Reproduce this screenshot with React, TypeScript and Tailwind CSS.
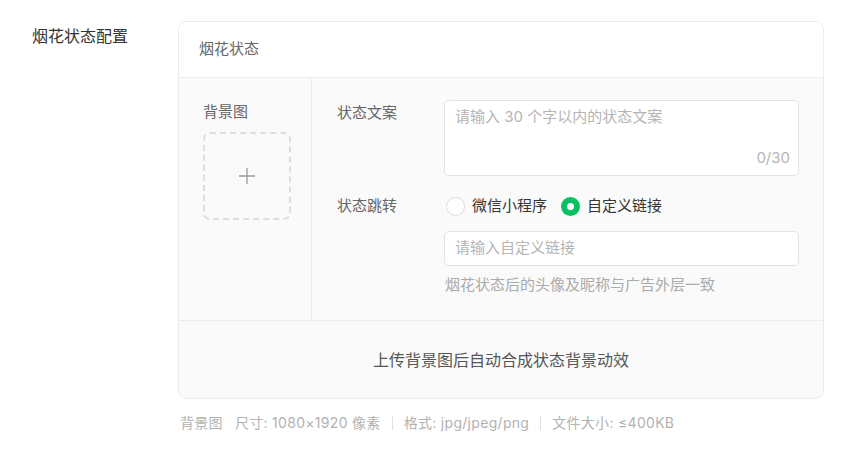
const font = { fontFamily: 'Inter, "Noto Sans CJK SC", sans-serif' }

function Radio({ checked, label }: { checked?: boolean; label: string }) {
  return (
    <label className="flex items-center gap-[7px]">
      {checked ? (
        <span className="flex h-[19px] w-[19px] items-center justify-center rounded-full bg-[#07c160]">
          <span className="h-[7px] w-[7px] rounded-full bg-white" />
        </span>
      ) : (
        <span className="h-[19px] w-[19px] rounded-full border border-[#dcdcdc] bg-white" />
      )}
      <span className="text-[15px] leading-[22px] text-[#353535]">{label}</span>
    </label>
  )
}

function Sep() {
  return <span className="mx-[11px] inline-block h-[14px] w-px bg-[#e2e2e2] align-[-2px]" />
}

export default function App() {
  return (
    <div className="flex h-[455px] w-[850px] bg-white pt-[21px]" style={font}>
      <div className="w-[178px] shrink-0 pl-[32px] pt-[3px] text-[16px] leading-[24px] text-[#353535]">
        烟花状态配置
      </div>

      <div className="w-[646px]">
        <div className="overflow-hidden rounded-[8px] border border-[#ececec] bg-[#fafafa]">
          {/* header */}
          <div className="flex h-[56px] items-center border-b border-[#ececec] bg-white pl-5 text-[15px] text-[#666]">
            烟花状态
          </div>

          {/* body */}
          <div className="flex border-b border-[#ececec]">
            <div className="w-[133px] shrink-0 border-r border-[#ececec] pl-6 pt-[23px]">
              <div className="text-[15px] leading-[22px] text-[#666]">背景图</div>
              <div className="mt-[9px] flex h-[88px] w-[88px] items-center justify-center rounded-[7px] border-2 border-dashed border-[#dedede]">
                <svg width="18" height="18" viewBox="0 0 18 18">
                  <path d="M9 1v16M1 9h16" stroke="#999" strokeWidth="1.3" />
                </svg>
              </div>
            </div>

            <div className="flex-1 pb-[24px] pl-[25px] pr-[24px] pt-[22px]">
              <div className="flex">
                <div className="w-[107px] shrink-0 pt-[2px] text-[15px] leading-[22px] text-[#666]">状态文案</div>
                <div className="relative h-[76px] flex-1 rounded-[5px] border border-[#e3e3e3] bg-white px-[10px] pt-[5px]">
                  <div className="text-[15px] leading-[22px] text-[#b5b5b5]">请输入 30 个字以内的状态文案</div>
                  <div className="absolute bottom-[6px] right-[8px] text-[15px] leading-[22px] text-[#b5b5b5]">0/30</div>
                </div>
              </div>

              <div className="mt-[19px] flex items-center">
                <div className="w-[107px] shrink-0 text-[15px] leading-[22px] text-[#666]">状态跳转</div>
                <div className="flex items-center gap-[14px] pl-[2px]">
                  <Radio label="微信小程序" />
                  <Radio checked label="自定义链接" />
                </div>
              </div>

              <div className="ml-[107px] mt-[14px] flex h-[35px] items-center rounded-[5px] border border-[#e3e3e3] bg-white px-[10px] text-[15px] text-[#b5b5b5]">
                请输入自定义链接
              </div>
              <div className="ml-[108px] mt-[8px] text-[15px] leading-[22px] text-[#aaa]">
                烟花状态后的头像及昵称与广告外层一致
              </div>
            </div>
          </div>

          {/* footer */}
          <div className="flex h-[77px] items-center justify-center text-[16px] text-[#555]">
            上传背景图后自动合成状态背景动效
          </div>
        </div>

        <div className="mt-[14px] pl-[2px] text-[14px] leading-[20px] tracking-[0.3px] text-[#b2b2b2]">
          <span>背景图</span>
          <span className="ml-[12px]">尺寸: 1080×1920 像素</span>
          <Sep />
          <span>格式: jpg/jpeg/png</span>
          <Sep />
          <span>文件大小: ≤400KB</span>
        </div>
      </div>
    </div>
  )
}
